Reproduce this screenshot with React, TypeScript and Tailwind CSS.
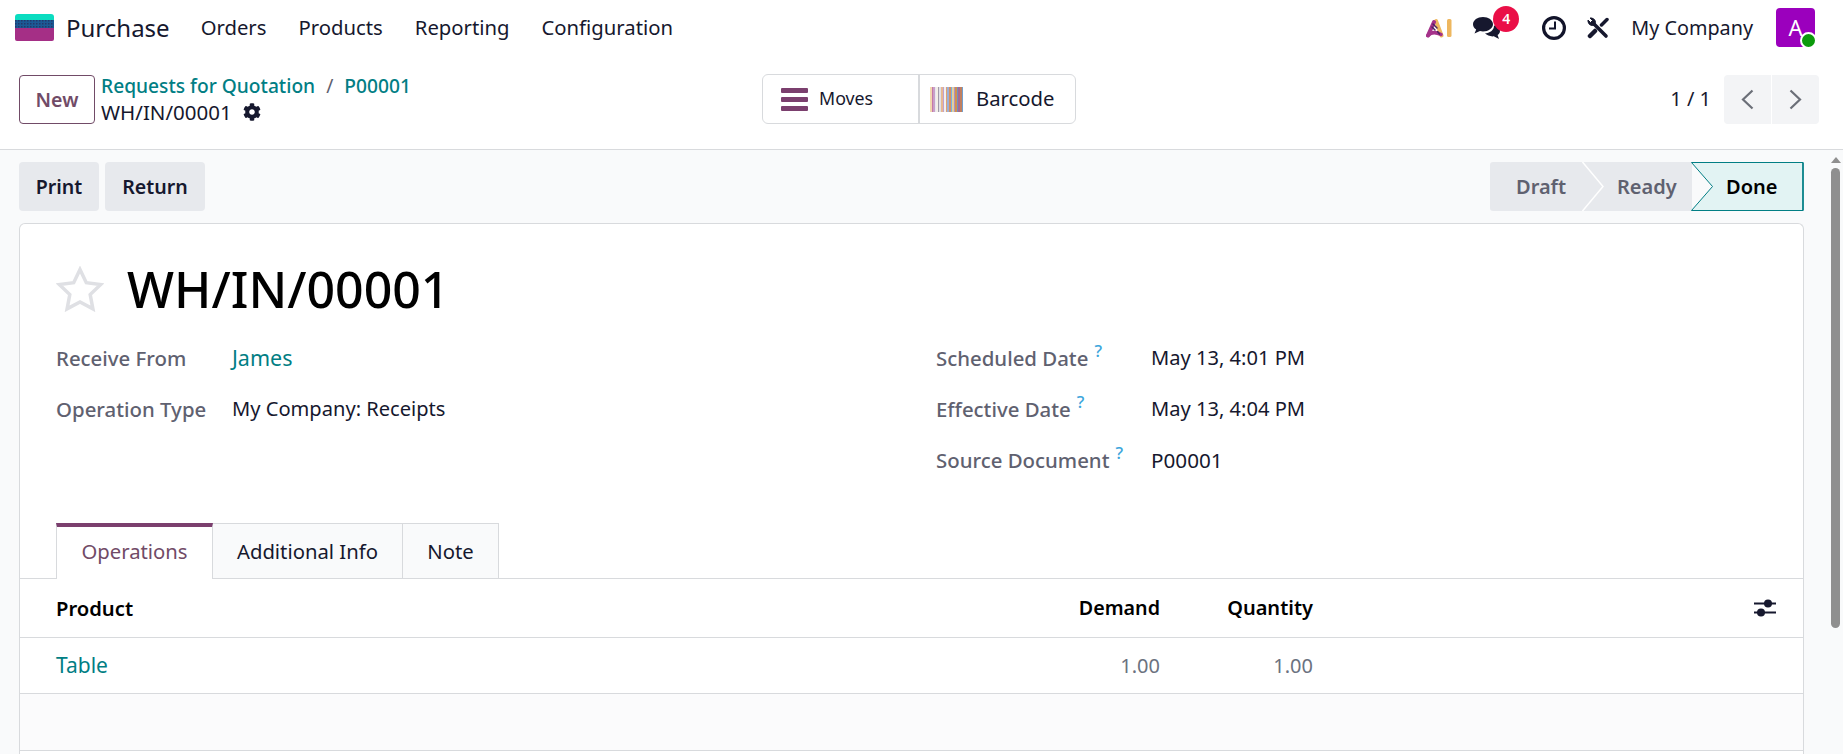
import type { ReactNode } from 'react'
import { FaCog } from 'react-icons/fa'

const LINK = 'text-[#017e84]'
const LABEL = 'text-[#5f6170] font-medium text-[20.4px]'

function AppLogo() {
  return (
    <svg width="39" height="27" viewBox="0 0 39 27" className="shrink-0">
      <defs>
        <pattern id="dither" width="3" height="3" patternUnits="userSpaceOnUse">
          <rect width="3" height="3" fill="#1b5a96" />
          <rect width="1.500" height="1.500" fill="#23386a" />
        </pattern>
      </defs>
      <path d="M0 3a3 3 0 0 1 3-3h33a3 3 0 0 1 3 3v3H0z" fill="#0bdcc0" />
      <rect y="6" width="39" height="8" fill="url(#dither)" />
      <path d="M0 14h39v11a2 2 0 0 1-2 2H2a2 2 0 0 1-2-2z" fill="#a52f86" />
    </svg>
  )
}

function AiLogo() {
  return (
    <svg width="26" height="20" viewBox="0 0 26 20" fill="none" strokeLinecap="round" className="shrink-0">
      <path d="M10 3 15.500 17.500" stroke="#eeb75f" strokeWidth="4" />
      <path d="M2 17.500 8 4" stroke="#a5328a" strokeWidth="4" />
      <path d="M2 17.500c3-3.500 7-4 13-1" stroke="#a5328a" strokeWidth="3.500" />
      <path d="M7 6 11 10M6 9l3 3M11.500 13.500l2 2.500" stroke="#4a2460" strokeWidth="1.500" />
      <rect x="21" y="1" width="4.500" height="18" rx="1.500" fill="#eeb75f" />
    </svg>
  )
}

function ChatIcon() {
  return (
    <svg width="27" height="22" viewBox="0 0 27 22" fill="#16182e" className="shrink-0">
      <path d="M10 0c5.500 0 10 3.200 10 7.200s-4.500 7.200-10 7.200c-1 0-2-.1-3-.3L1.500 16.500l1.700-4C1.200 11.200 0 9.300 0 7.200 0 3.200 4.500 0 10 0z" />
      <path d="M21 8.500c3.500.6 6 2.800 6 5.500 0 1.600-.9 3-2.400 4l1.400 4-5.200-2.700c-3.200.4-6.800-.8-8.800-3 4.500 0 9.200-3 9-7.800z" />
    </svg>
  )
}

function ToolsIcon() {
  return (
    <svg width="22" height="22" viewBox="0 0 22 22" fill="none" stroke="#16182e" className="shrink-0">
      <path d="M7 7 19 19" strokeWidth="3.600" strokeLinecap="round" />
      <path d="M1 4.500A4.500 4.500 0 0 0 7.500 8l.5-.5A4.500 4.500 0 0 0 4.500 1L3 1l2.500 2.500-2 2L1 3z" fill="#16182e" strokeWidth="1" />
      <path d="M20 2.500 14.500 8" strokeWidth="3.500" strokeLinecap="round" />
      <path d="M8 14 3 19" strokeWidth="4.500" strokeLinecap="round" />
    </svg>
  )
}

function ClockIcon() {
  return (
    <svg width="24" height="24" viewBox="0 0 24 24" fill="none" stroke="#12142a" className="shrink-0">
      <circle cx="12" cy="12" r="10.400" strokeWidth="3.200" />
      <path d="M13 5.500v7H7" strokeWidth="2" />
    </svg>
  )
}

// thin coloured bars with pale gaps, read off the reference
const BARCODE = [
  '#f2d8b0', '#c678a8', '#c8a0c8', '#e8e8f0', '#f4efe8', '#a09aa8', '#e0e0e8', '#e8b890', '#c0a0d0', '#f0f0f0',
  '#e0a070', '#9ab0d8', '#d89060', '#78b0e0', '#e0d0a0', '#b090c0', '#d09050', '#7090c0', '#a86a90', '#c08060', '#70a0d0',
]

function Barcode() {
  return (
    <div className="flex h-[25px] w-[33px] shrink-0">
      {BARCODE.map((c, i) => (
        <span key={i} className="flex-1" style={{ backgroundColor: c }} />
      ))}
    </div>
  )
}

function Help() {
  return <sup className="relative -top-[9px] ml-[6px] text-[17px] font-medium leading-none text-[#3ba5dc]">?</sup>
}

function Field({ label, help, width, children }: { label: string; help?: boolean; width: string; children: ReactNode }) {
  return (
    <div className="flex h-[51px] items-center">
      <div className={`${width} ${LABEL}`}>
        {label}
        {help && <Help />}
      </div>
      <div>{children}</div>
    </div>
  )
}

export default function App() {
  return (
    <div className="flex h-[754px] w-[1843px] flex-col overflow-hidden bg-white font-['Noto_Sans',sans-serif] text-[20px] text-[#16182e]">
      {/* top bar */}
      <div className="flex h-[55px] shrink-0 items-center pl-[15px] pr-[28px]">
        <AppLogo />
        <span className="ml-[12px] text-[24px]">Purchase</span>
        <nav className="ml-[31px] flex gap-[32px] text-[20.300px]">
          <span>Orders</span>
          <span>Products</span>
          <span>Reporting</span>
          <span>Configuration</span>
        </nav>
        <div className="ml-auto flex items-center">
          <AiLogo />
          <div className="relative ml-[21px]">
            <ChatIcon />
            <span className="absolute -right-[19px] -top-[11px] flex h-[26px] w-[26px] items-center justify-center rounded-full bg-[#ea0f47] text-[14px] font-semibold text-white">4</span>
          </div>
          <div className="ml-[42px]"><ClockIcon /></div>
          <div className="ml-[21px]"><ToolsIcon /></div>
          <span className="ml-[22px] text-[19.800px]">My Company</span>
          <div className="relative ml-[23px] flex h-[39px] w-[39px] items-center justify-center rounded-[4px] bg-[#9b00bd] text-[22px] text-white">
            A
            <span className="absolute -bottom-[2px] -right-[2px] h-[17px] w-[17px] rounded-full border-2 border-white bg-[#0b9a0b]" />
          </div>
        </div>
      </div>

      {/* control panel */}
      <div className="flex h-[95px] shrink-0 border-b border-[#d8dadd] pl-[19px] pr-[24px] pt-[20px]">
        <div className="flex w-[743px] items-start">
          <button className="flex h-[49px] w-[76px] items-center justify-center rounded-[4px] border border-[#714b67] text-[19.600px] font-semibold text-[#714b67]">New</button>
          <div className="-mt-[2px] ml-[6px] leading-[26px]">
            <div className={`text-[19.200px] font-medium ${LINK}`}>
              Requests for Quotation
              <span className="mx-[11px] font-normal text-[#5f6170]">/</span>
              P00001
            </div>
            <div className="flex items-center text-[20.500px]">
              WH/IN/00001
              <FaCog size={18} className="ml-[11px]" />
            </div>
          </div>
        </div>
        <div className="-mt-px flex h-[50px] w-[314px] rounded-[6px] border border-[#d8dadd]">
          <div className="flex w-[157px] items-center border-r-2 border-[#d8dadd] pl-[18px] text-[17.800px]">
            <div className="flex h-[23px] w-[27px] flex-col justify-between">
              <span className="h-[5px] rounded-[1px] bg-[#7b3f6e]" />
              <span className="h-[5px] rounded-[1px] bg-[#7b3f6e]" />
              <span className="h-[5px] rounded-[1px] bg-[#7b3f6e]" />
            </div>
            <span className="ml-[11px] pb-px">Moves</span>
          </div>
          <div className="flex flex-1 items-center pl-[10px] text-[20.300px]">
            <Barcode />
            <span className="ml-[13px] pb-px">Barcode</span>
          </div>
        </div>
        <div className="-mt-px ml-auto flex h-[50px] items-center">
          <span>1 / 1</span>
          <div className="ml-[13px] flex h-[49px] w-[95px] rounded-[4px] bg-[#f3f4f6]">
            <div className="flex flex-1 items-center justify-center border-r border-white">
              <svg width="13" height="21" viewBox="0 0 13 21" fill="none" stroke="#6b6f78" strokeWidth="2.200"><path d="M11.500 1.500 2 10.500l9.500 9" /></svg>
            </div>
            <div className="flex flex-1 items-center justify-center">
              <svg width="13" height="21" viewBox="0 0 13 21" fill="none" stroke="#6b6f78" strokeWidth="2.200"><path d="m1.500 1.500 9.500 9-9.500 9" /></svg>
            </div>
          </div>
        </div>
      </div>

      {/* main area with scrollbar */}
      <div className="flex min-h-0 flex-1 bg-[#f9fafb]">
        <div className="flex min-w-0 flex-1 flex-col pl-[19px] pr-[27px] pt-[12px]">
          <div className="flex h-[49px] shrink-0 items-center justify-between font-semibold">
            <div className="flex gap-[6px] text-[19.600px]">
              <button className="flex h-[49px] w-[80px] items-center justify-center rounded-[4px] bg-[#e7e9ed]">Print</button>
              <button className="flex h-[49px] w-[100px] items-center justify-center rounded-[4px] bg-[#e7e9ed]">Return</button>
            </div>
            <div className="relative flex h-[49px] w-[314px] text-[20px] text-[#5f6170]">
              <svg width="314" height="49" viewBox="0 0 314 49" className="absolute left-0 top-0">
                <path d="M3 0h199v49H3a3 3 0 0 1-3-3V3a3 3 0 0 1 3-3z" fill="#e7e9ed" />
                <path d="M92.500 0 113 24.500 92.500 49" fill="none" stroke="#ffffff" strokeWidth="1.500" />
                <path d="M201.500 .5H313v48H201.500l21-24z" fill="#e2f3f3" stroke="#017e84" />
                <path d="M313 .5v48" stroke="#017e84" strokeWidth="1.500" />
              </svg>
              <div className="relative flex h-full w-[92px] items-center pl-[26px]">Draft</div>
              <div className="relative flex h-full w-[109px] items-center pl-[35px]">Ready</div>
              <div className="relative flex h-full flex-1 items-center pl-[35px] text-black">Done</div>
            </div>
          </div>

          <div className="mt-[12px] flex-1 rounded-t-[6px] border border-b-0 border-[#d8dadd] bg-white">
            <div className="pl-[36px] pt-[35px]">
              <div className="flex items-center">
                <svg width="48" height="46" viewBox="0 0 48 46" fill="none" stroke="#dfe0e4" strokeWidth="3.500" className="shrink-0">
                  <path d="m24 3.500 6.300 13.200 14.400 1.900-10.500 10 2.700 14.300L24 36l-12.900 6.900 2.700-14.300-10.500-10 14.400-1.900z" />
                </svg>
                <span className="ml-[23px] text-[50px] font-medium leading-[60px] text-black">WH/IN/00001</span>
              </div>
              <div className="mt-[14px] flex">
                <div className="w-[880px]">
                  <Field label="Receive From" width="w-[176px]"><span className={`text-[21.500px] ${LINK}`}>James</span></Field>
                  <Field label="Operation Type" width="w-[176px]"><span className="text-[20.100px]">My Company: Receipts</span></Field>
                </div>
                <div>
                  <Field label="Scheduled Date" help width="w-[215px]"><span className="text-[20.100px]">May 13, 4:01 PM</span></Field>
                  <Field label="Effective Date" help width="w-[215px]"><span className="text-[20.100px]">May 13, 4:04 PM</span></Field>
                  <Field label="Source Document" help width="w-[215px]"><span className="text-[20.700px]">P00001</span></Field>
                </div>
              </div>
            </div>

            {/* tabs */}
            <div className="mt-[37px] flex h-[56px] border-b border-[#d8dadd] pl-[36px] text-[20.300px]">
              <div className="-mb-px flex w-[157px] items-center justify-center border-x border-t-[4px] border-x-[#d8dadd] border-t-[#7b3f6e] bg-white pb-[3px] text-[#714b67]">Operations</div>
              <div className="flex w-[190px] items-center justify-center border-r border-t border-[#d8dadd] bg-[#f9fafb]">Additional Info</div>
              <div className="flex w-[96px] items-center justify-center border-r border-t border-[#d8dadd] bg-[#f9fafb]">Note</div>
            </div>

            {/* move lines */}
            <div className="flex h-[59px] items-center border-b border-[#d8dadd] pl-[36px] font-semibold text-black">
              <span className="flex-1 text-[20.200px]">Product</span>
              <span className="w-[101px] text-right text-[19.700px]">Demand</span>
              <span className="w-[153px] text-right">Quantity</span>
              <svg width="22" height="18" viewBox="0 0 22 18" fill="#16182e" className="ml-[441px] mr-[27px] shrink-0">
                <path d="M0 3.500h22v2H0zM0 12.500h22v2H0z" />
                <circle cx="14" cy="4.500" r="4" />
                <circle cx="7" cy="13.500" r="4" />
              </svg>
            </div>
            <div className="flex h-[56px] items-center border-b border-[#d8dadd] pl-[36px]">
              <span className={`flex-1 text-[21px] ${LINK}`}>Table</span>
              <span className="w-[101px] text-right text-[#6b7280]">1.00</span>
              <span className="w-[153px] text-right text-[#6b7280]">1.00</span>
              <span className="ml-[441px] mr-[27px] w-[22px]" />
            </div>
            <div className="h-[57px] border-b border-[#d8dadd] bg-[#fbfbfc]" />
          </div>
        </div>
        <div className="flex w-[12px] shrink-0 flex-col items-start">
          <span className="mt-[7px] h-0 w-0 border-x-[5px] border-b-[6px] border-x-transparent border-b-[#8f8f8f]" />
          <span className="mt-[5px] h-[460px] w-[9px] rounded-full bg-[#8f8f8f]" />
        </div>
      </div>
    </div>
  )
}
